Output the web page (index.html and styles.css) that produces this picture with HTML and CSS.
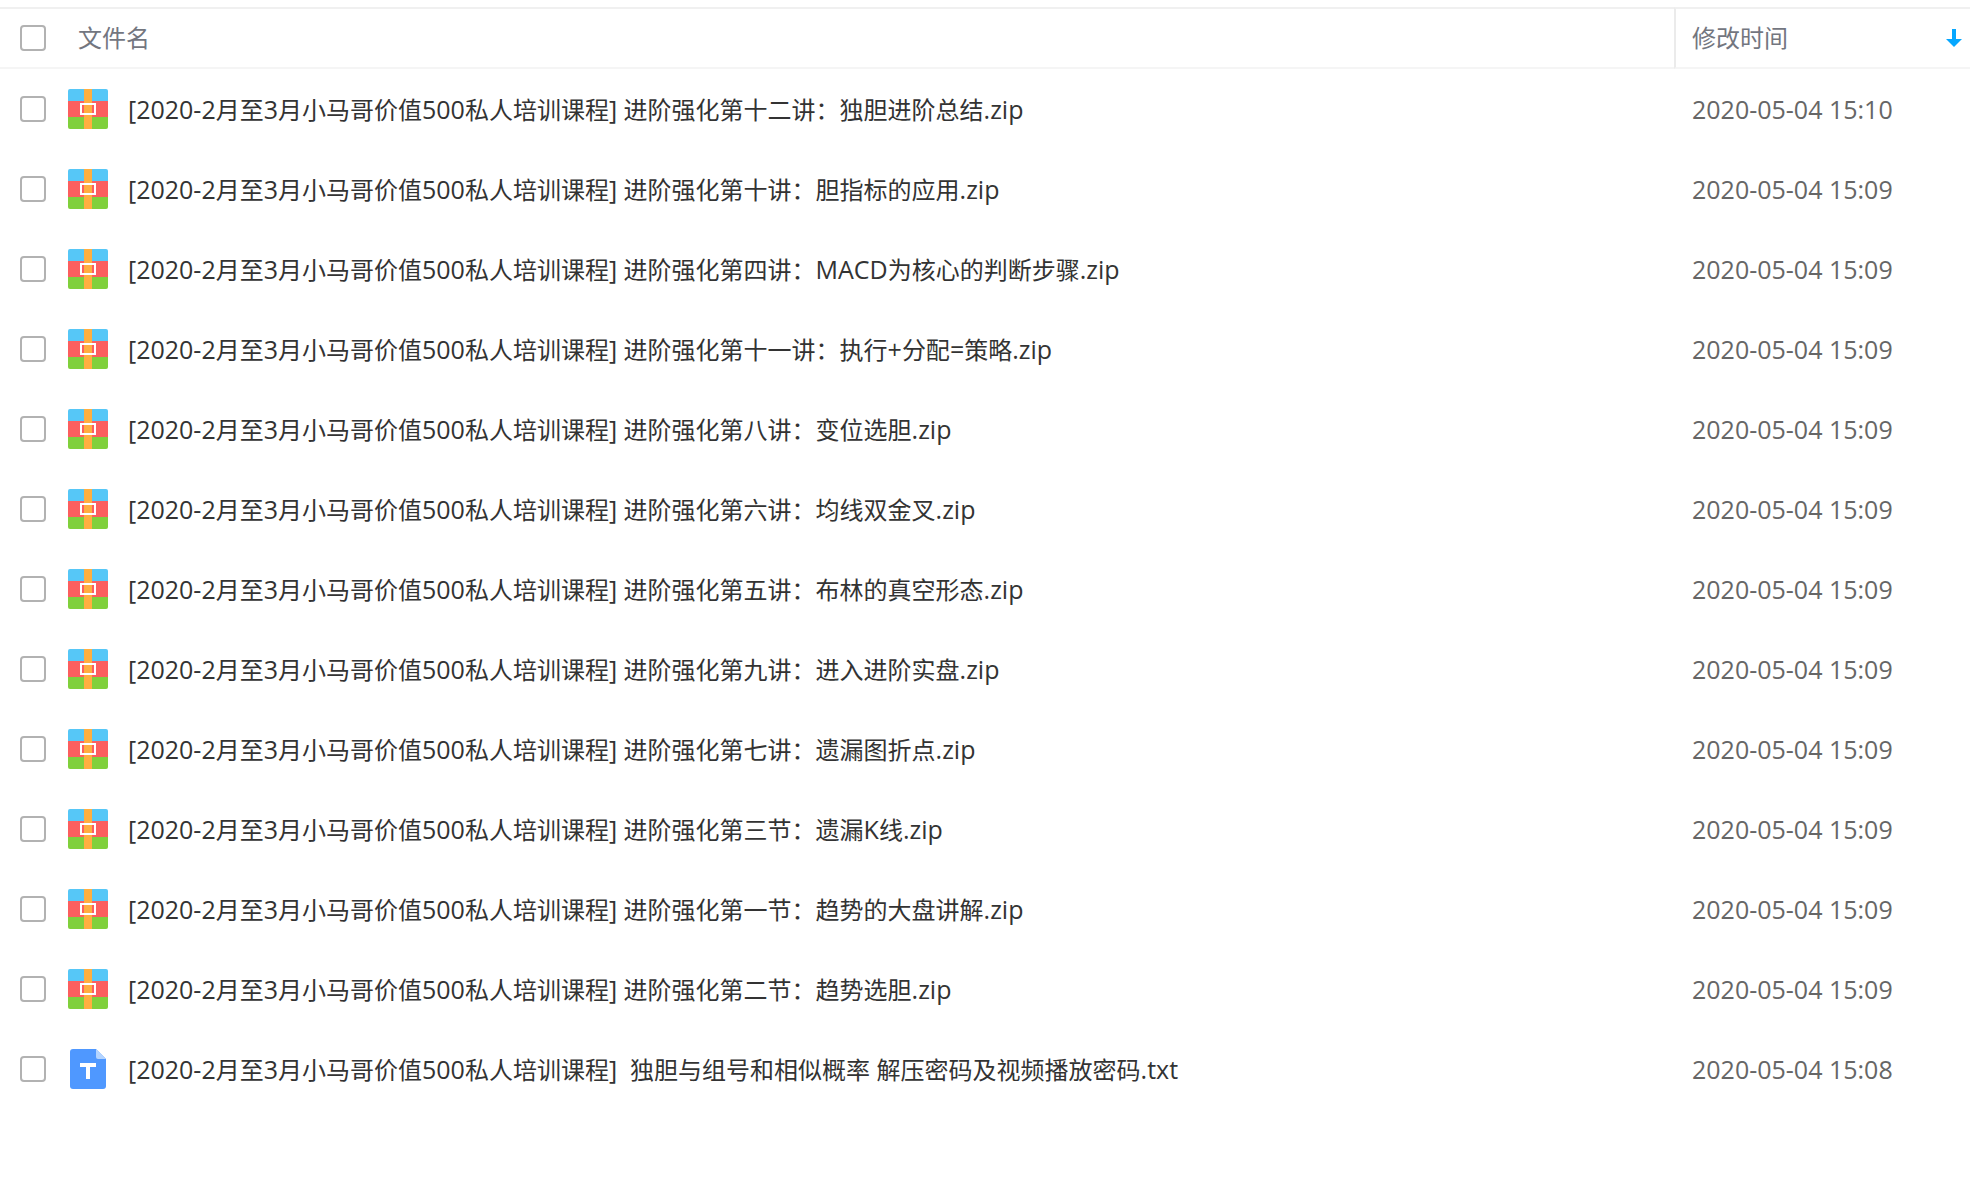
FILE: index.html
```
<!DOCTYPE html>
<html lang="zh-CN">
<head>
    <meta charset="UTF-8">
    <meta name="viewport" content="width=device-width, initial-scale=1.0">
    <title>文件列表</title>
    <link rel="stylesheet" href="styles.css">
</head>
<body>

    <!-- Shared file type icons -->
    <svg class="icon-defs" aria-hidden="true">
        <symbol id="icon-zip" viewBox="0 0 40 40">
            <path fill="#56c7f7" d="M0 12V2a2 2 0 0 1 2-2h36a2 2 0 0 1 2 2v10z"/>
            <path fill="#fc5f5f" d="M0 12h40v16H0z"/>
            <path fill="#80d03c" d="M0 28h40v10a2 2 0 0 1-2 2H2a2 2 0 0 1-2-2z"/>
            <path fill="#ffaf40" d="M16 0h8v40h-8z"/>
            <path fill="none" stroke="#fff" stroke-width="2" d="M13 15h14v10H13z"/>
        </symbol>
        <symbol id="icon-txt" viewBox="0 0 40 40">
            <path fill="#4f98ff" d="M5 0h23l10 10v27a3 3 0 0 1-3 3H5a3 3 0 0 1-3-3V3a3 3 0 0 1 3-3z"/>
            <path fill="#b3d4ff" d="M28 0l10 10h-8a2 2 0 0 1-2-2z"/>
            <path fill="none" stroke="#fff" stroke-width="4" d="M12 16h16M20 16v14"/>
        </symbol>
    </svg>

    <table class="file-list">
        <thead>
            <tr>
                <th class="col-name">
                    <div class="cell">
                        <input type="checkbox" class="check" id="check-all">
                        <label class="head-label" for="check-all">文件名</label>
                    </div>
                </th>
                <th class="col-time">
                    <div class="cell sort">
                        <span>修改时间</span>
                        <svg class="sort-arrow" viewBox="0 0 16 18" aria-hidden="true">
                            <path fill="#06a7ff" d="M6 0h4v10h6l-8 8-8-8h6z"/>
                        </svg>
                    </div>
                </th>
            </tr>
        </thead>
        <tbody id="file-rows"></tbody>
    </table>

    <script>
        const prefix = "[2020-2月至3月小马哥价值500私人培训课程] ";

        const files = [
            ["进阶强化第十二讲：独胆进阶总结.zip", "15:10"],
            ["进阶强化第十讲：胆指标的应用.zip", "15:09"],
            ["进阶强化第四讲：MACD为核心的判断步骤.zip", "15:09"],
            ["进阶强化第十一讲：执行+分配=策略.zip", "15:09"],
            ["进阶强化第八讲：变位选胆.zip", "15:09"],
            ["进阶强化第六讲：均线双金叉.zip", "15:09"],
            ["进阶强化第五讲：布林的真空形态.zip", "15:09"],
            ["进阶强化第九讲：进入进阶实盘.zip", "15:09"],
            ["进阶强化第七讲：遗漏图折点.zip", "15:09"],
            ["进阶强化第三节：遗漏K线.zip", "15:09"],
            ["进阶强化第一节：趋势的大盘讲解.zip", "15:09"],
            ["进阶强化第二节：趋势选胆.zip", "15:09"],
            [" 独胆与组号和相似概率 解压密码及视频播放密码.txt", "15:08"]
        ];

        // Latin letters and digits are set a little larger than the Chinese text
        function markLatin(text) {
            return text.replace(/[ -~]+/g, '<span class="latin">$&</span>');
        }

        document.getElementById("file-rows").innerHTML = files.map(([name, time], i) => `
            <tr>
                <td>
                    <div class="cell">
                        <input type="checkbox" class="check" id="file-${i}">
                        <svg class="file-icon" aria-hidden="true"><use href="#icon-${name.slice(-3)}"/></svg>
                        <label class="file-name" for="file-${i}">${markLatin(prefix + name)}</label>
                    </div>
                </td>
                <td class="time latin">2020-05-04 ${time}</td>
            </tr>
        `).join('');
    </script>
</body>
</html>
```
FILE: styles.css
```
* {
    margin: 0;
    padding: 0;
    box-sizing: border-box;
}

body {
    font-family: "Open Sans", "Noto Sans CJK SC", sans-serif;
    font-size: 24px;
    line-height: 32px;
    color: #333;
    background: #fff;
    padding-top: 7px;
}

.icon-defs {
    display: none;
}

.file-list {
    width: 100%;
    table-layout: fixed;
    border-spacing: 0;
}

.file-list th {
    height: 62px;
    border-top: 2px solid #f0f0f0;
    border-bottom: 2px solid #f5f5f5;
    color: #73767f;
    font-weight: normal;
    text-align: left;
}

.file-list .col-time {
    width: 296px;
    padding: 0 8px 0 16px;
    border-left: 2px solid #ebebeb;
}

.file-list td {
    height: 80px;
}

.cell {
    display: flex;
    align-items: center;
}

.sort {
    justify-content: space-between;
}

.sort-arrow {
    width: 16px;
    height: 18px;
}

.check {
    appearance: none;
    flex: none;
    width: 26px;
    height: 26px;
    margin-left: 20px;
    border: 2px solid #b2b2b2;
    border-radius: 4px;
    background: #fff;
    cursor: pointer;
}

.check:checked {
    background: #06a7ff;
    border-color: #06a7ff;
}

.head-label {
    margin-left: 32px;
}

.file-icon {
    flex: none;
    width: 40px;
    height: 40px;
    margin: 0 20px 0 22px;
}

.file-name {
    white-space: pre;
}

.latin {
    font-size: 25px;
}

.file-list .time {
    padding-left: 18px;
    color: #666;
}
```
